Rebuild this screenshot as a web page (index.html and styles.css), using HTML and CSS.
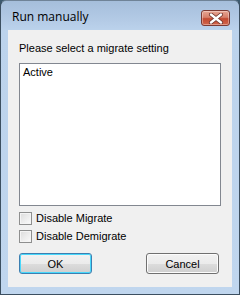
FILE: index.html
```html
<!DOCTYPE html>
<html>
<head>
<meta charset="utf-8">
<link rel="stylesheet" href="styles.css">
</head>
<body>
<div class="window">
  <div class="titlebar">
    <span class="title">Run manually</span>
    <div class="close">
      <svg width="16" height="11" viewBox="0 0 16 11">
        <path d="M3 1.5 L13 9.5 M13 1.5 L3 9.5" stroke="#6a3028" stroke-width="4" stroke-linecap="round"/>
        <path d="M3 1.5 L13 9.5 M13 1.5 L3 9.5" stroke="#ffffff" stroke-width="2.4" stroke-linecap="round"/>
      </svg>
    </div>
  </div>
  <div class="client">
    <div class="label">Please select a migrate setting</div>
    <div class="listbox"><div class="item">Active</div></div>
    <div class="checks">
      <label class="check"><span class="box"></span>Disable Migrate</label>
      <label class="check"><span class="box"></span>Disable Demigrate</label>
    </div>
    <div class="buttons">
      <div class="btn default">OK</div>
      <div class="btn">Cancel</div>
    </div>
  </div>
</div>
</body>
</html>
```
FILE: styles.css
```css
html, body { margin: 0; padding: 0; background: #3d5a6e; }
body { width: 240px; height: 295px; overflow: hidden; }
.window {
  width: 240px; height: 295px; box-sizing: border-box;
  border: 1px solid #3c4f60; border-top-color: #6f8397;
  border-radius: 6px 6px 0 0;
  background: linear-gradient(to bottom, #a5bedb 0px, #b4cbe6 20px, #bcd3ec 30px, #c0d6ee 100%);
  display: flex; flex-direction: column;
}
.titlebar {
  height: 29px; flex: none; display: flex; align-items: center;
  padding: 0 9px 0 11px; justify-content: space-between;
}
.title {
  font-family: "Open Sans", "Noto Sans", sans-serif; font-size: 12px; color: #000;
  margin-top: 1px;
}
.close {
  width: 29px; height: 16px; box-sizing: border-box; margin-top: 5px;
  border: 1px solid #7b3a33; border-radius: 3px;
  background: linear-gradient(to bottom, #e7a592 0%, #d6806b 45%, #c24a31 55%, #d2664c 100%);
  display: flex; align-items: center; justify-content: center;
  box-shadow: inset 0 0 0 1px rgba(255,255,255,0.35);
}
.client {
  flex: 1; margin: 0 7px 7px 7px; background: #f0f0f0;
  font-family: "Liberation Sans", Arial, sans-serif; font-size: 11px; color: #000;
  padding: 12px 10px 0 11px; position: relative;
}
.label { height: 13px; line-height: 13px; }
.listbox {
  margin-top: 8px; height: 143px; width: 202px; box-sizing: border-box;
  border: 1px solid #828790; background: #fff;
  padding: 2px 3px;
}
.item { line-height: 13px; }
.checks { margin-top: 6px; display: flex; flex-direction: column; gap: 5px; }
.check { display: flex; align-items: center; gap: 4px; height: 13px; line-height: 13px; }
.box {
  width: 13px; height: 13px; box-sizing: border-box; border: 1px solid #8e8f8f;
  background: linear-gradient(135deg, #dcdcdc, #fbfbfb);
  box-shadow: inset 0 0 0 1px #f4f4f4;
}
.buttons { margin-top: 10px; display: flex; justify-content: space-between; width: 200px; }
.btn {
  width: 73px; height: 21px; box-sizing: border-box;
  border: 1px solid #707070; border-radius: 3px;
  background: linear-gradient(to bottom, #f2f2f2 0%, #ebebeb 50%, #dddddd 51%, #cfcfcf 100%);
  box-shadow: inset 0 0 0 1px #fcfcfc;
  display: flex; align-items: center; justify-content: center;
}
.btn.default {
  border-color: #3c7fb1;
  box-shadow: inset 0 0 0 1px #48d8fb;
}
```
